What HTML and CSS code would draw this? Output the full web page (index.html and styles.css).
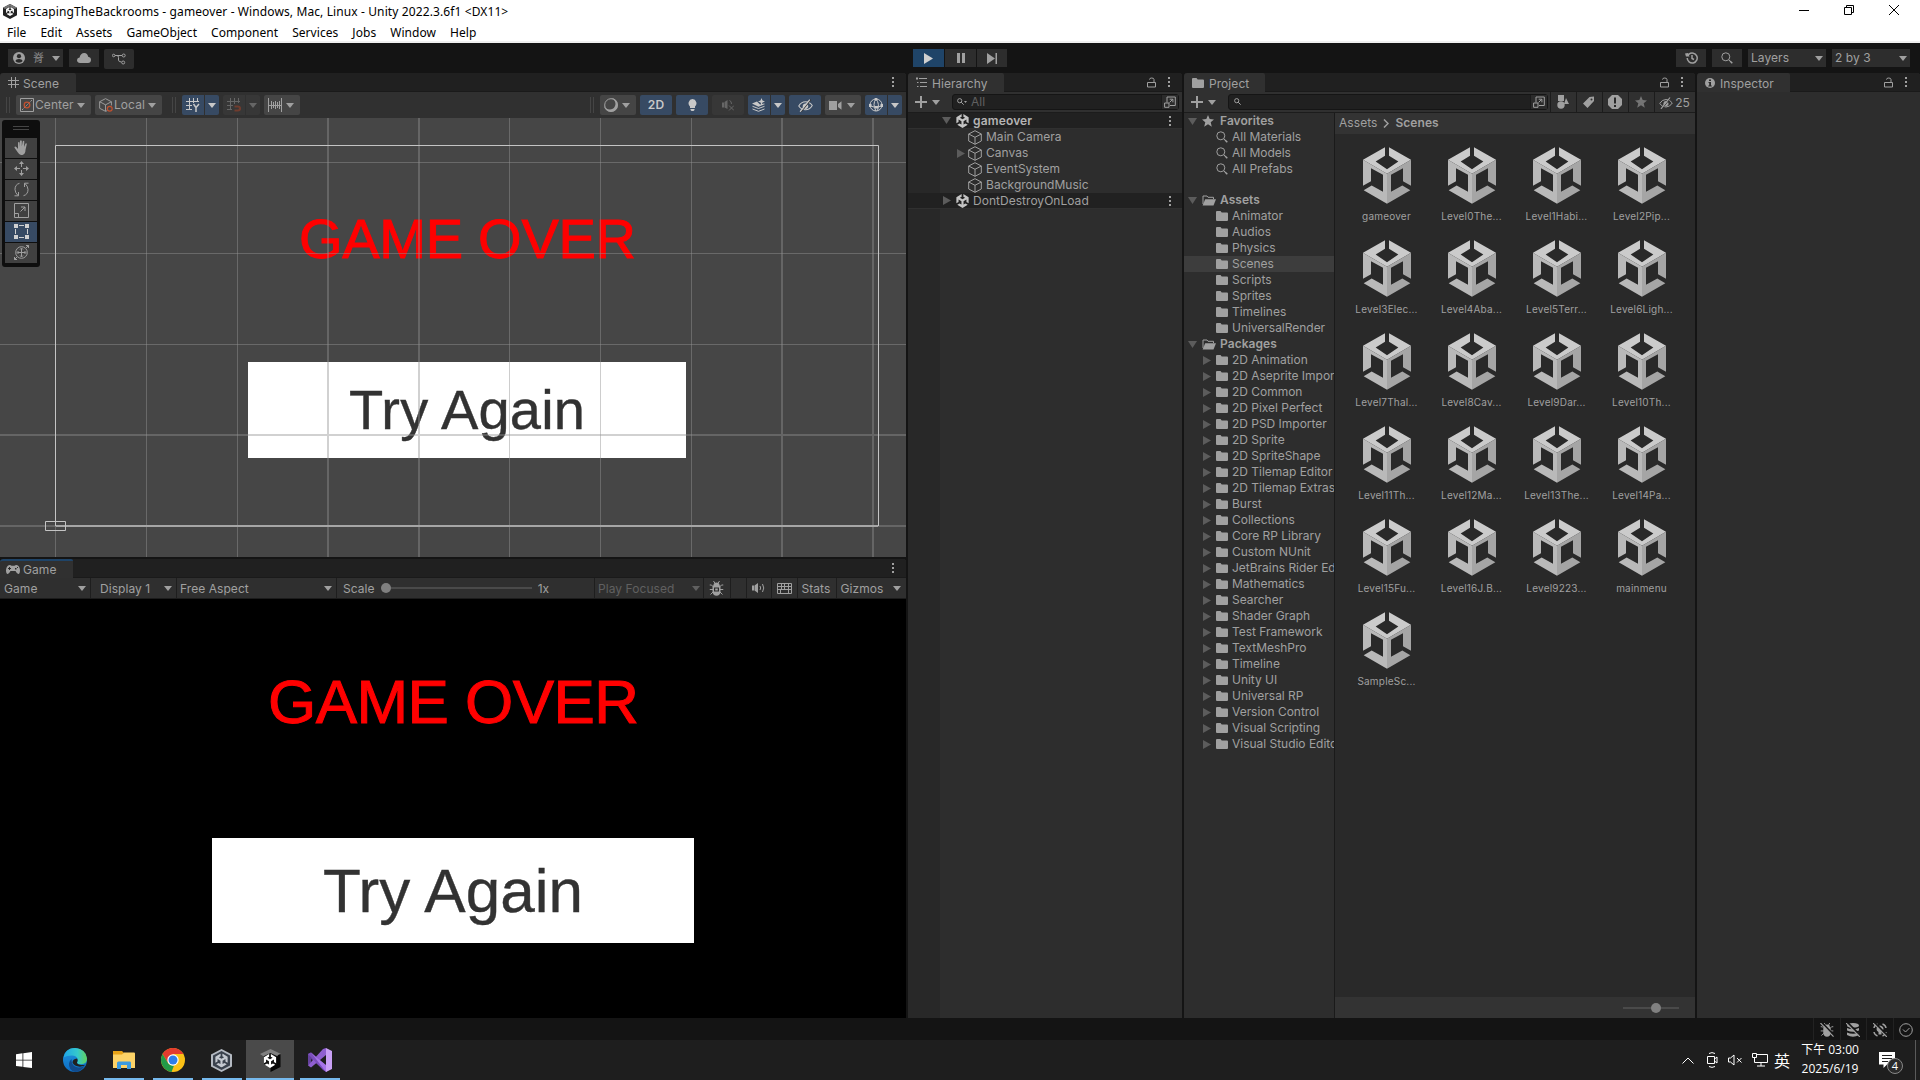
FILE: index.html
```html
<!DOCTYPE html>
<html lang="en">
<head>
    <meta charset="UTF-8">
    <meta name="viewport" content="width=device-width, initial-scale=1.0">
    <title>EscapingTheBackrooms - gameover</title>
    <link rel="stylesheet" href="styles.css">
</head>
<body>
    <svg class="defs">
        <defs>
            <symbol id="scene-asset" viewBox="0 0 144 170">
                <path fill="#cbcbcb" d="M66 0V26L38 43L72 66L106 43L78 26V0L144 38L72 80L0 38Z"/>
                <path fill="#b9b9b9" d="M0 38L72 80V170L2 129L26 115L60 134V83L24 63V102L0 116Z"/>
                <path fill="#a5a5a5" d="M144 38L72 80V170L142 129L118 115L84 134V83L120 63V102L144 116Z"/>
            </symbol>
            <symbol id="unity" viewBox="0 0 14 16">
                <path d="M6 0V3L4 4.200L7 6L10 4.200L8 3V0L14 3.600V10.500L11.500 9V6.300L8.200 8.200V12L10.400 10.800L13 12.300L7 16L1 12.300L3.600 10.800L5.800 12V8.200L2.500 6.300V9L0 10.500V3.600Z"/>
            </symbol>
            <symbol id="cube" viewBox="0 0 14 15">
                <path class="line" d="M7 .7L13.300 4V11L7 14.300L.7 11V4ZM.7 4L7 7.300L13.300 4M7 7.300V14.300"/>
            </symbol>
            <symbol id="folder" viewBox="0 0 12 10">
                <path d="M0 1Q0 0 1 0H4.500L5.700 1.600H11Q12 1.600 12 2.600V9Q12 10 11 10H1Q0 10 0 9Z"/>
            </symbol>
            <symbol id="folder-open" viewBox="0 0 14 11">
                <path class="line" d="M1 9V1H5L6 2.300H11.500V4"/>
                <path d="M3.200 4.300H14L11.500 10.500H.6Z"/>
            </symbol>
            <symbol id="lens" viewBox="0 0 12 12">
                <circle class="line" cx="4.800" cy="4.800" r="4"/>
                <path class="line" d="M7.700 7.700L9 9"/>
                <path class="bold" d="M9 9L11.300 11.300"/>
            </symbol>
            <symbol id="lens-small" viewBox="0 0 7 7">
                <circle class="line" cx="2.700" cy="2.700" r="2.100"/>
                <path class="line" d="M4.200 4.200L6.700 6.700"/>
            </symbol>
            <symbol id="star" viewBox="0 0 12 12">
                <path d="M6 0L7.700 4.100L12 4.500L8.700 7.300L9.800 11.700L6 9.300L2.200 11.700L3.300 7.300L0 4.500L4.300 4.100Z"/>
            </symbol>
            <symbol id="caret" viewBox="0 0 8 5"><path d="M0 0H8L4 5Z"/></symbol>
            <symbol id="fold" viewBox="0 0 9 7"><path d="M0 0H9L4.500 7Z"/></symbol>
            <symbol id="unfold" viewBox="0 0 8 9"><path d="M0 0V9L8 4.500Z"/></symbol>
            <symbol id="kebab" viewBox="0 0 2 10"><path d="M0 0H2V2H0ZM0 4H2V6H0ZM0 8H2V10H0Z"/></symbol>
            <symbol id="lock" viewBox="0 0 9 11">
                <path class="line" d="M.5 5.500H8.500V10H.5ZM7 5V2.500Q7 1 4.700 1Q2.500 1 2.500 2.600"/>
            </symbol>
            <symbol id="plus" viewBox="0 0 12 12"><path d="M5 0H7V5H12V7H7V12H5V7H0V5H5Z"/></symbol>
            <symbol id="open-search" viewBox="0 0 12 12">
                <path class="line" d="M3 6.500V1H11.300V9.500H6M.6 7H5V11.300H.6ZM5.500 6.500L8.700 3.300M5.700 3.200H8.900V6.300"/>
            </symbol>
            <symbol id="eye-off" viewBox="0 0 14 12">
                <path class="line" d="M.7 6.500Q3 2.500 7 2.500Q11 2.500 13.300 6Q11 10 7 10Q3 10 .7 6.500Z"/>
                <path d="M9.500 6.200A2.600 2.600 0 1 1 4.400 6.200A2.600 2.600 0 0 1 9.500 6.200Z"/>
                <path class="line cut" d="M12 .5L3 11.800"/>
                <path class="slash" d="M11 .5L2 11.800"/>
            </symbol>
            <symbol id="bug" viewBox="0 0 14 15">
                <path class="line" d="M4 0L5.300 2M10 0L8.700 2M0 4H2L4 6M14 4H12L10 6M0 8.500H14M1 13.500L3.500 11M13 13.500L10.500 11"/>
                <path d="M4 4Q4 1.500 7 1.500Q10 1.500 10 4L11 6V11Q10.500 14.500 7 14.800Q3.500 14.500 3 11V6Z"/>
            </symbol>
        </defs>
    </svg>

    <header class="titlebar">
        <svg class="app-icon" viewBox="0 0 14 15">
            <path fill="#222" d="M7 0L14 3.700V11.300L7 15L0 11.300V3.700Z"/>
            <path fill="#777" d="M7 0L14 3.700L12 5L7 2.500L2 5L0 3.700Z"/>
            <use href="#unity" x="3" y="3" width="8" height="9" fill="#fff"/>
        </svg>
        <span class="caption">EscapingTheBackrooms - gameover - Windows, Mac, Linux - Unity 2022.3.6f1 &lt;DX11&gt;</span>
        <div class="win-buttons">
            <svg viewBox="0 0 10 10"><path d="M0 5.500H10"/></svg>
            <svg viewBox="0 0 10 10"><path d="M.5 2.500H7.500V9.500H.5ZM2.500 2.500V.5H9.500V7.500H7.500"/></svg>
            <svg viewBox="0 0 10 10"><path d="M0 0L10 10M10 0L0 10"/></svg>
        </div>
    </header>
    <nav class="menubar">
        <span>File</span><span>Edit</span><span>Assets</span><span>GameObject</span><span>Component</span><span>Services</span><span>Jobs</span><span>Window</span><span>Help</span>
    </nav>

    <div class="main-toolbar">
        <div class="bar-group left">
            <div class="bar-btn account">
                <svg class="i12" viewBox="0 0 12 12"><circle cx="6" cy="6" r="6"/><circle class="hole" cx="6" cy="4.200" r="2.100"/><path class="hole" d="M2.300 9Q3 7 6 7Q9 7 9.700 9Q8.500 10.700 6 10.700Q3.500 10.700 2.300 9Z"/></svg>
                <span>脊</span>
                <svg class="caret"><use href="#caret"/></svg>
            </div>
            <div class="bar-btn cloud"><svg width="14" height="10" viewBox="0 0 14 10"><path d="M3 10Q0 9.700 0 7Q.2 4.500 2.600 4.400Q3.500 .2 7.300 0Q10.500 .2 11.200 3.700Q14 4.200 14 7Q13.800 9.800 11 10Z"/></svg></div>
            <div class="bar-btn vcs"><svg width="14" height="12" viewBox="0 0 14 12"><path class="line" d="M3 2.500H10M5 2.500Q6.500 2.500 6.500 4.500V7Q6.500 9 9.500 9"/><circle class="line" cx="1.700" cy="2.500" r="1.300"/><circle class="line" cx="11.700" cy="2.500" r="1.500"/><circle class="line" cx="11.200" cy="9.500" r="1.500"/></svg></div>
        </div>
        <div class="bar-group play">
            <div class="bar-btn on"><svg width="9" height="11" viewBox="0 0 9 11"><path d="M0 0L9 5.500L0 11Z"/></svg></div>
            <div class="bar-btn"><svg width="8" height="10" viewBox="0 0 8 10"><path d="M0 0H3V10H0ZM5 0H8V10H5Z"/></svg></div>
            <div class="bar-btn step"><svg width="10" height="11" viewBox="0 0 10 11"><path d="M0 0L8 5.500L0 11ZM8.500 0H10V11H8.500Z"/></svg></div>
        </div>
        <div class="bar-group right">
            <div class="bar-btn"><svg width="13" height="12" viewBox="0 0 13 12"><path class="bold" d="M2.200 6A5 5 0 1 0 4 2.200L2.500 3.500M7 3V6.500L9 7.500"/><path d="M0 1.500L1 4.500L4.500 4.500L3 1Z"/></svg></div>
            <div class="bar-btn"><svg class="i12"><use href="#lens"/></svg></div>
            <div class="bar-btn drop"><span>Layers</span><svg class="caret"><use href="#caret"/></svg></div>
            <div class="bar-btn drop"><span>2 by 3</span><svg class="caret"><use href="#caret"/></svg></div>
        </div>
    </div>

    <main class="workspace">
        <div class="column views">
            <section class="panel scene">
                <div class="tabs">
                    <div class="tab w76"><svg class="i11" viewBox="0 0 11 11"><path class="line" d="M3.500 0V11M7.500 0V11M0 3.500H11M0 7.500H11"/></svg>Scene</div>
                    <svg class="kebab"><use href="#kebab"/></svg>
                </div>
                <div class="scene-tools">
                    <i class="grip"></i>
                    <div class="tool w75"><svg class="i14" viewBox="0 0 14 14"><path class="line" d="M.5 .5H13.500V13.500H.5Z"/><path class="line" stroke-dasharray="2 1" d="M2 12L12 2"/><circle class="red" cx="7" cy="7" r="2.800"/></svg><span>Center</span><svg class="caret"><use href="#caret"/></svg></div>
                    <div class="tool w67 gap4"><svg class="i14" viewBox="0 0 15 15"><path class="line" d="M9 13.500L7 14.300L.7 11V4L7 .7L13.300 4V8M.7 4L7 7.300L13.300 4M7 7.300V14"/><circle class="red" cx="11.500" cy="11.500" r="2.600"/></svg><span>Local</span><svg class="caret"><use href="#caret"/></svg></div>
                    <i class="grip second"></i>
                    <div class="tool w22 on flat-r"><svg class="i14" viewBox="0 0 14 14"><path class="line" d="M3.500 0V12M7.500 0V5M11.500 0V4M0 3.500H13M0 7.500H6M0 11.500H6"/><path class="bold" d="M7.500 6L10 9.500L13 6M10 9.500V14"/></svg></div>
                    <div class="tool w14 on flat-l"><svg class="caret"><use href="#caret"/></svg></div>
                    <div class="tool w22 off flat-r gap4"><svg class="i14" viewBox="0 0 14 14"><path class="line" d="M3.500 0V12M7.500 0V6M11.500 0V5M0 3.500H13M0 7.500H6M0 11.500H5"/><path class="red thick" d="M7.500 8.500H11Q13 8.500 13 10.500Q13 12.500 11 12.500H7.500"/></svg></div>
                    <div class="tool w14 off flat-l"><svg class="caret"><use href="#caret"/></svg></div>
                    <div class="tool w36 gap4"><svg class="i14" viewBox="0 0 14 14"><path class="line" d="M.5 0V14M3.500 3V11M5.500 4V10M7.500 3V11M9.500 4V10M11.500 3V11M13.500 0V14M0 7.500H14"/></svg><svg class="caret"><use href="#caret"/></svg></div>

                    <i class="grip push"></i>
                    <div class="tool w36"><svg class="i14" viewBox="0 0 14 14"><path d="M7 0A7 7 0 1 1 0 7Q1.500 11.500 6 11.500Q11 11 11.500 6Q11.300 1.500 7 0Z"/><circle class="line" cx="7" cy="7" r="6.300"/></svg><svg class="caret"><use href="#caret"/></svg></div>
                    <div class="tool w32 on gap4"><b>2D</b></div>
                    <div class="tool w32 on gap4"><svg width="9" height="12" viewBox="0 0 9 12"><path d="M4.500 0A4.300 4.300 0 0 1 7 7.500V9H2V7.500A4.300 4.300 0 0 1 4.500 0ZM2.500 10H6.500V11L5.500 12H3.500L2.500 11Z"/></svg></div>
                    <div class="tool w32 off gap4"><svg class="i12" viewBox="0 0 12 12"><path d="M0 3.500H2V8.500H0ZM2.500 3L5.500 1V10L2.500 8.500Z"/><path class="line" d="M7.500 1.500Q9.500 2 9.500 5M7 6.500L12 11.500M12 6.500L7 11.500"/></svg></div>
                    <div class="tool w22 on flat-r gap4"><svg class="i14" viewBox="0 0 14 14"><path d="M0 5.500L5 3.500L8 6.500L12 5.500L13 6L6.500 8.700ZM9.500 0L10.500 2.500L13 3.500L10.500 4.500L9.500 7L8.500 4.500L6 3.500L8.500 2.500Z"/><path class="line" d="M.5 8.300L6.500 10.500L12.500 8.300M.5 11L6.500 13.300L12.500 11"/></svg></div>
                    <div class="tool w14 on flat-l"><svg class="caret"><use href="#caret"/></svg></div>
                    <div class="tool w32 on gap4"><svg width="15" height="13"><use href="#eye-off"/></svg></div>
                    <div class="tool w36 gap4"><svg width="13" height="9" viewBox="0 0 13 9"><path d="M0 0H8V9H0ZM9 3L12.500 .3V8.700L9 6Z"/></svg><svg class="caret"><use href="#caret"/></svg></div>
                    <div class="tool w22 on flat-r gap4"><svg class="i14" viewBox="0 0 14 14"><circle class="line" cx="7" cy="7" r="6"/><path class="line" d="M1 7.500Q7 11 13 7.500M7 1Q3 6 7 13M7 1Q11 6 8.500 12.500"/><path d="M5.700 0H8.300V2.500H5.700ZM0 6H2.500V9H0ZM11.500 6H14V9H11.500ZM6 8H9V10.500H6Z"/></svg></div>
                    <div class="tool w14 on flat-l end"><svg class="caret"><use href="#caret"/></svg></div>
                </div>
                <div class="scene-view">
                    <svg class="canvas" width="906" height="439" viewBox="0 118 906 439">
                        <rect x="248" y="362" width="438" height="96" fill="#fff"/>
                        <text class="over" x="299" y="258" font-size="56" textLength="337">GAME OVER</text>
                        <text class="retry" x="349" y="429" font-size="56" textLength="236">Try Again</text>
                        <g class="grid">
                            <path d="M146.500 118V557M237.500 118V557M509.500 118V557M600.500 118V557M691.500 118V557M55.500 118V557"/>
                            <path class="wide" d="M328 118V557M419 118V557M782 118V557M873 118V557M0 435H906M0 526H906"/>
                            <path d="M0 162.500H906M0 253.500H906M0 344.500H906"/>
                        </g>
                        <path class="bounds" d="M55.500 526V145.500H878.500V526"/>
                        <path class="bounds base" d="M56 526H878"/>
                        <path class="bounds" d="M45.500 521.500H65.500V530.500H45.500Z"/>
                    </svg>
                    <div class="palette">
                        <i></i>
                        <div><svg class="i15" viewBox="0 0 15 15"><path d="M4 9V2.500Q4.800 1.300 5.500 2.500V7L6 1Q7 -.4 7.800 1V6.500L8.800 1.300Q9.800 .2 10.300 1.500L10 7L11.500 3.500Q12.800 2.800 12.800 4L11.500 10Q11.500 14 8.500 15H7Q5 14.500 3.500 12L.4 7.500Q.8 6 2.300 7Z"/></svg></div>
                        <div><svg class="i15" viewBox="0 0 15 15"><path d="M7.500 0L10 3H5ZM7.500 15L10 12H5ZM0 7.500L3 5V10ZM15 7.500L12 5V10ZM7 3H8V6H7ZM7 9H8V12H7ZM3 7H6V8H3ZM9 7H12V8H9Z"/></svg></div>
                        <div><svg class="i15" viewBox="0 0 15 15"><path class="line" d="M5.500 1.300Q1 2.500 1 7.500Q1.200 11 4 13.500M.5 13.800H4.500V10M9.500 13.700Q14 12.500 14 7.500Q13.800 4 11 1.500M14.500 1.200H10.500V5"/></svg></div>
                        <div><svg class="i15" viewBox="0 0 15 15"><path class="line" d="M.5 .5H14.500V14.500H.5ZM.5 10.500H4.500V14.500M6.500 8.500L11 4M7 4H11V8"/></svg></div>
                        <div class="on"><svg class="i15" viewBox="0 0 15 15"><path d="M0 0H4V4H0ZM11 0H15V4H11ZM0 11H4V15H0ZM11 11H15V15H11Z"/><path class="line" d="M5 1.500H10M5 13.500H10M1.500 5V10M13.500 5V10"/></svg></div>
                        <div><svg class="i15" viewBox="0 0 15 15"><circle class="line" cx="7.500" cy="7.500" r="5.800"/><path class="line" d="M7.500 3.500V11.500M3.500 7.500H11.500M6 4.500L7.500 3L9 4.500M6 10.500L7.500 12L9 10.500M4.500 6L3 7.500L4.500 9M10.500 6L12 7.500L10.500 9M12 .5H14.500V3M.5 12V14.500H3M14.500 .5L12 3M.5 14.500L3 12"/></svg></div>
                    </div>
                </div>
            </section>

            <section class="panel game">
                <div class="tabs">
                    <div class="tab w73 focused"><svg width="14" height="9" viewBox="0 0 14 9"><path d="M3.500 0Q5 0 5.500 .8H8.500Q9 0 10.500 0Q13.500 .3 14 5Q14 9 12.300 9Q11 9 9.500 6H4.500Q3 9 1.700 9Q0 9 0 5Q.5 .3 3.500 0Z"/><path class="hole" d="M2 3H5V4H2ZM3 2H4V5H3ZM9 3H10.500V4.500H9ZM11 2H12V3H11Z"/></svg>Game</div>
                    <svg class="kebab"><use href="#kebab"/></svg>
                </div>
                <div class="game-tools">
                    <div class="seg g-mode"><span>Game</span><svg class="caret"><use href="#caret"/></svg></div>
                    <div class="seg g-display"><span>Display 1</span><svg class="caret"><use href="#caret"/></svg></div>
                    <div class="seg g-aspect"><span>Free Aspect</span><svg class="caret"><use href="#caret"/></svg></div>
                    <div class="seg g-scale"><span>Scale</span><div class="slider"><i></i></div><span>1x</span></div>
                    <div class="seg g-focus"><span>Play Focused</span><svg class="caret"><use href="#caret"/></svg></div>
                    <div class="seg g-bug"><svg width="15" height="15" viewBox="0 0 14 15"><use href="#bug" width="14" height="15"/><path class="hole" d="M4.500 6.500H9.500V10.500H4.500Z"/><path d="M5.700 7.500H8.300V9.500H5.700Z"/></svg></div>
                    <div class="seg g-empty"></div>
                    <div class="seg g-icon"><svg width="13" height="10" viewBox="0 0 13 10"><path d="M0 2.500H2V7.500H0ZM2.500 2.500L6 0V10L2.500 7.500Z"/><path class="line" d="M8 3Q9.300 5 8 7M10.500 1Q13 5 10.500 9"/></svg></div>
                    <div class="seg g-icon"><svg width="15" height="11" viewBox="0 0 15 11"><path class="line" d="M.5 .5H14.500V10.500H.5ZM.5 3.500H14.500M.5 6.500H14.500M4.500 .5V6.500M7.500 .5V6.500M11.500 .5V6.500M3.500 6.500V10.500M11.500 6.500V10.500"/></svg></div>
                    <div class="seg g-stats"><span>Stats</span></div>
                    <div class="seg g-gizmos"><span>Gizmos</span></div>
                    <div class="seg g-last"><svg class="caret"><use href="#caret"/></svg></div>
                </div>
                <div class="game-view">
                    <svg class="canvas" width="906" height="419" viewBox="0 599 906 419">
                        <rect x="212" y="838" width="482" height="105" fill="#fff"/>
                        <text class="over" x="268" y="723" font-size="62" textLength="371">GAME OVER</text>
                        <text class="retry" x="323" y="912" font-size="62" textLength="260">Try Again</text>
                    </svg>
                </div>
            </section>
        </div>

        <section class="panel hierarchy">
            <div class="tabs">
                <div class="tab w96"><svg class="i11" viewBox="0 0 11 11"><path class="line" d="M3 1.500H11M4 5.500H11M4 9.500H11M0 1.500H2M1 0V3M1 5.500H2.500M1 9.500H2.500"/></svg>Hierarchy</div>
                <svg class="lock"><use href="#lock"/></svg>
                <svg class="kebab"><use href="#kebab"/></svg>
            </div>
            <div class="search-tools">
                <svg class="i12"><use href="#plus"/></svg><svg class="caret"><use href="#caret"/></svg>
                <div class="search"><svg class="i7"><use href="#lens-small"/></svg><svg class="tiny"><use href="#caret"/></svg><span>All</span><div class="expand"><svg class="i12"><use href="#open-search"/></svg></div></div>
            </div>
            <div class="objects">
                <div class="object root"><svg class="fold"><use href="#fold"/></svg><svg class="logo"><use href="#unity"/></svg><b>gameover</b><svg class="kebab"><use href="#kebab"/></svg></div>
                <div class="object"><svg class="cube"><use href="#cube"/></svg>Main Camera</div>
                <div class="object parent"><svg class="unfold"><use href="#unfold"/></svg><svg class="cube"><use href="#cube"/></svg>Canvas</div>
                <div class="object"><svg class="cube"><use href="#cube"/></svg>EventSystem</div>
                <div class="object"><svg class="cube"><use href="#cube"/></svg>BackgroundMusic</div>
                <div class="object root"><svg class="unfold"><use href="#unfold"/></svg><svg class="logo"><use href="#unity"/></svg>DontDestroyOnLoad<svg class="kebab"><use href="#kebab"/></svg></div>
            </div>
        </section>

        <section class="panel project">
            <div class="tabs">
                <div class="tab w81"><svg width="12" height="10"><use href="#folder"/></svg>Project</div>
                <svg class="lock"><use href="#lock"/></svg>
                <svg class="kebab"><use href="#kebab"/></svg>
            </div>
            <div class="search-tools">
                <svg class="i12"><use href="#plus"/></svg><svg class="caret"><use href="#caret"/></svg>
                <div class="search"><svg class="i7"><use href="#lens-small"/></svg><div class="expand"><svg class="i12"><use href="#open-search"/></svg></div></div>
                <div class="filter"><svg width="12" height="14" viewBox="0 0 12 14"><path d="M1 0H7V6H1ZM9 3L12 9H7Z"/><circle cx="4" cy="10" r="3.700"/></svg></div>
                <div class="filter"><svg class="i12" viewBox="0 0 12 12"><path fill-rule="evenodd" d="M6.500 1L11 .5V5L4.500 12L0 7.500ZM8.500 2.500A1 1 0 1 0 9.500 3.500A1 1 0 0 0 8.500 2.500Z"/></svg></div>
                <div class="filter"><svg class="i14" viewBox="0 0 14 14"><path d="M4 0H10L14 4V10L10 14H4L0 10V4Z"/><path class="hole" d="M6 2.500H8V8.500H6ZM6 10H8V12H6Z"/></svg></div>
                <div class="filter dim"><svg class="i12"><use href="#star"/></svg></div>
                <div class="filter hidden-count"><svg width="14" height="12"><use href="#eye-off"/></svg>25</div>
            </div>
            <div class="browser">
                <div class="tree">
                    <div class="node top"><svg class="fold"><use href="#fold"/></svg><svg class="i12"><use href="#star"/></svg><b>Favorites</b></div>
                    <div class="node leaf"><svg class="i12"><use href="#lens"/></svg>All Materials</div>
                    <div class="node leaf"><svg class="i12"><use href="#lens"/></svg>All Models</div>
                    <div class="node leaf last"><svg class="i12"><use href="#lens"/></svg>All Prefabs</div>
                    <div class="node top"><svg class="fold"><use href="#fold"/></svg><svg class="dir-open"><use href="#folder-open"/></svg><b>Assets</b></div>
                    <div class="node leaf"><svg class="dir"><use href="#folder"/></svg>Animator</div>
                    <div class="node leaf"><svg class="dir"><use href="#folder"/></svg>Audios</div>
                    <div class="node leaf"><svg class="dir"><use href="#folder"/></svg>Physics</div>
                    <div class="node leaf selected"><svg class="dir"><use href="#folder"/></svg>Scenes</div>
                    <div class="node leaf"><svg class="dir"><use href="#folder"/></svg>Scripts</div>
                    <div class="node leaf"><svg class="dir"><use href="#folder"/></svg>Sprites</div>
                    <div class="node leaf"><svg class="dir"><use href="#folder"/></svg>Timelines</div>
                    <div class="node leaf"><svg class="dir"><use href="#folder"/></svg>UniversalRender</div>
                    <div class="node top"><svg class="fold"><use href="#fold"/></svg><svg class="dir-open"><use href="#folder-open"/></svg><b>Packages</b></div>
                    <div class="node pkg"><svg class="unfold"><use href="#unfold"/></svg><svg class="dir"><use href="#folder"/></svg>2D Animation</div>
                    <div class="node pkg"><svg class="unfold"><use href="#unfold"/></svg><svg class="dir"><use href="#folder"/></svg>2D Aseprite Import</div>
                    <div class="node pkg"><svg class="unfold"><use href="#unfold"/></svg><svg class="dir"><use href="#folder"/></svg>2D Common</div>
                    <div class="node pkg"><svg class="unfold"><use href="#unfold"/></svg><svg class="dir"><use href="#folder"/></svg>2D Pixel Perfect</div>
                    <div class="node pkg"><svg class="unfold"><use href="#unfold"/></svg><svg class="dir"><use href="#folder"/></svg>2D PSD Importer</div>
                    <div class="node pkg"><svg class="unfold"><use href="#unfold"/></svg><svg class="dir"><use href="#folder"/></svg>2D Sprite</div>
                    <div class="node pkg"><svg class="unfold"><use href="#unfold"/></svg><svg class="dir"><use href="#folder"/></svg>2D SpriteShape</div>
                    <div class="node pkg"><svg class="unfold"><use href="#unfold"/></svg><svg class="dir"><use href="#folder"/></svg>2D Tilemap Editor</div>
                    <div class="node pkg"><svg class="unfold"><use href="#unfold"/></svg><svg class="dir"><use href="#folder"/></svg>2D Tilemap Extras</div>
                    <div class="node pkg"><svg class="unfold"><use href="#unfold"/></svg><svg class="dir"><use href="#folder"/></svg>Burst</div>
                    <div class="node pkg"><svg class="unfold"><use href="#unfold"/></svg><svg class="dir"><use href="#folder"/></svg>Collections</div>
                    <div class="node pkg"><svg class="unfold"><use href="#unfold"/></svg><svg class="dir"><use href="#folder"/></svg>Core RP Library</div>
                    <div class="node pkg"><svg class="unfold"><use href="#unfold"/></svg><svg class="dir"><use href="#folder"/></svg>Custom NUnit</div>
                    <div class="node pkg"><svg class="unfold"><use href="#unfold"/></svg><svg class="dir"><use href="#folder"/></svg>JetBrains Rider Ed</div>
                    <div class="node pkg"><svg class="unfold"><use href="#unfold"/></svg><svg class="dir"><use href="#folder"/></svg>Mathematics</div>
                    <div class="node pkg"><svg class="unfold"><use href="#unfold"/></svg><svg class="dir"><use href="#folder"/></svg>Searcher</div>
                    <div class="node pkg"><svg class="unfold"><use href="#unfold"/></svg><svg class="dir"><use href="#folder"/></svg>Shader Graph</div>
                    <div class="node pkg"><svg class="unfold"><use href="#unfold"/></svg><svg class="dir"><use href="#folder"/></svg>Test Framework</div>
                    <div class="node pkg"><svg class="unfold"><use href="#unfold"/></svg><svg class="dir"><use href="#folder"/></svg>TextMeshPro</div>
                    <div class="node pkg"><svg class="unfold"><use href="#unfold"/></svg><svg class="dir"><use href="#folder"/></svg>Timeline</div>
                    <div class="node pkg"><svg class="unfold"><use href="#unfold"/></svg><svg class="dir"><use href="#folder"/></svg>Unity UI</div>
                    <div class="node pkg"><svg class="unfold"><use href="#unfold"/></svg><svg class="dir"><use href="#folder"/></svg>Universal RP</div>
                    <div class="node pkg"><svg class="unfold"><use href="#unfold"/></svg><svg class="dir"><use href="#folder"/></svg>Version Control</div>
                    <div class="node pkg"><svg class="unfold"><use href="#unfold"/></svg><svg class="dir"><use href="#folder"/></svg>Visual Scripting</div>
                    <div class="node pkg"><svg class="unfold"><use href="#unfold"/></svg><svg class="dir"><use href="#folder"/></svg>Visual Studio Edito</div>
                </div>
                <div class="content">
                    <div class="crumbs"><span>Assets</span><svg width="6" height="9" viewBox="0 0 6 9"><path class="bold" d="M1 .5L5 4.500L1 8.500"/></svg><b>Scenes</b></div>
                    <div class="assets">
                        <div class="asset"><svg><use href="#scene-asset"/></svg>gameover</div>
                        <div class="asset"><svg><use href="#scene-asset"/></svg>Level0The...</div>
                        <div class="asset"><svg><use href="#scene-asset"/></svg>Level1Habi...</div>
                        <div class="asset"><svg><use href="#scene-asset"/></svg>Level2Pip...</div>
                        <div class="asset"><svg><use href="#scene-asset"/></svg>Level3Elec...</div>
                        <div class="asset"><svg><use href="#scene-asset"/></svg>Level4Aba...</div>
                        <div class="asset"><svg><use href="#scene-asset"/></svg>Level5Terr...</div>
                        <div class="asset"><svg><use href="#scene-asset"/></svg>Level6Ligh...</div>
                        <div class="asset"><svg><use href="#scene-asset"/></svg>Level7Thal...</div>
                        <div class="asset"><svg><use href="#scene-asset"/></svg>Level8Cav...</div>
                        <div class="asset"><svg><use href="#scene-asset"/></svg>Level9Dar...</div>
                        <div class="asset"><svg><use href="#scene-asset"/></svg>Level10Th...</div>
                        <div class="asset"><svg><use href="#scene-asset"/></svg>Level11Th...</div>
                        <div class="asset"><svg><use href="#scene-asset"/></svg>Level12Ma...</div>
                        <div class="asset"><svg><use href="#scene-asset"/></svg>Level13The...</div>
                        <div class="asset"><svg><use href="#scene-asset"/></svg>Level14Pa...</div>
                        <div class="asset"><svg><use href="#scene-asset"/></svg>Level15Fu...</div>
                        <div class="asset"><svg><use href="#scene-asset"/></svg>Level16J.B...</div>
                        <div class="asset"><svg><use href="#scene-asset"/></svg>Level9223...</div>
                        <div class="asset"><svg><use href="#scene-asset"/></svg>mainmenu</div>
                        <div class="asset"><svg><use href="#scene-asset"/></svg>SampleSc...</div>
                    </div>
                    <div class="zoom-bar"><div class="slider"><i></i></div></div>
                </div>
            </div>
        </section>

        <section class="panel inspector">
            <div class="tabs">
                <div class="tab w93"><svg width="10" height="10" viewBox="0 0 10 10"><circle cx="5" cy="5" r="5"/><path class="hole" d="M4 1.500H6V3H4ZM3.500 4H6V7.500H6.800V8.500H3.300V7.500H4.200V5H3.500Z"/></svg>Inspector</div>
                <svg class="lock"><use href="#lock"/></svg>
                <svg class="kebab"><use href="#kebab"/></svg>
            </div>
        </section>
    </main>

    <div class="statusbar">
        <div><svg class="i14" viewBox="0 0 14 15"><use href="#bug" width="14" height="15"/><path class="cut-wide" d="M2 0L14 12.500"/><path class="slash" d="M0 0L14 14.500"/></svg></div>
        <div><svg class="i14" viewBox="0 0 14 14"><path d="M1 2.500Q1 0 7 0Q13 0 13 2.500Q13 4.500 7 4.500Q1 4.500 1 2.500ZM1 5Q7 7.500 13 5V7.500Q7 10 1 7.500ZM1 9.500Q7 12 13 9.500V12Q7 15.500 1 12Z"/><path class="cut-wide" d="M2 0L14 12"/><path class="slash" d="M0 0L14 14"/></svg></div>
        <div><svg class="i14" viewBox="0 0 14 14"><path class="bold" d="M1 5Q1.500 2 4.500 1M9.500 1Q12.500 2 13 5M13 9Q12.500 12 9.500 13M4.500 13Q1.500 12 1 9"/><path d="M7 2.500Q10.500 3 10.500 6Q10 8 8.500 9V11.500H5.500V9Q3.500 8 3.500 6Q4 3 7 2.500Z"/><path class="cut-wide" d="M2 0L14 12"/><path class="slash" d="M0 0L14 14"/></svg></div>
        <div><svg class="i14" viewBox="0 0 14 14"><circle class="line" cx="7" cy="7" r="6.300"/><path class="line" d="M4 6.500L6.500 9L10.500 5"/></svg></div>
    </div>

    <footer class="taskbar">
        <div class="task"><svg width="16" height="16" viewBox="0 0 16 16"><path fill="#fff" d="M0 2.200L6.500 1.300V7.700H0ZM7.300 1.200L16 0V7.700H7.300ZM0 8.500H6.500V14.800L0 13.900ZM7.300 8.500H16V16L7.300 14.900Z"/></svg></div>
        <div class="task">
            <svg width="24" height="24" viewBox="0 0 24 24">
                <linearGradient id="edge-top"><stop offset="0" stop-color="#1fa5e8"/><stop offset=".6" stop-color="#35c9cc"/><stop offset="1" stop-color="#62d35a"/></linearGradient>
                <linearGradient id="edge-body" x2="0" y2="1"><stop offset="0" stop-color="#2196dd"/><stop offset="1" stop-color="#0c6cc4"/></linearGradient>
                <circle cx="12" cy="12" r="12" fill="url(#edge-body)"/>
                <path fill="url(#edge-top)" d="M.5 9.500Q2 0 12 0Q23 1 24 10.500Q24 16 18 16.300Q14 16.200 14 14.500Q15.500 13 14.500 10.500Q13 7.500 9 7.500Q3.500 7.500 .5 9.500Z"/>
                <path fill="#114a8b" d="M8.500 11Q8 18 15 19.500Q19 20 22 17.500Q18 24 12 24Q5.500 22 6 15.500Q6.500 12.500 8.500 11Z"/>
                <path fill="#202020" d="M14 10.500Q9.500 11 9.500 14.500Q11 18.500 17 18.700Q21 18.500 22.800 16.500Q20 17.500 17 16.800Q13 16 14.300 13.800Q15.200 12 14 10.500Z"/>
            </svg>
        </div>
        <div class="task open">
            <svg width="22" height="18" viewBox="0 0 22 18"><path fill="#e8a317" d="M0 0H9L10.500 1.500V4H0Z"/><path fill="#fdd367" d="M0 3.500H9L11 1.500H21Q22 1.500 22 2.500V17H0Z"/><path fill="#3c9be0" d="M4 18V12Q4 10.500 5.500 10.500H17Q18 10.500 18 12V18H14V14H8V18Z"/></svg>
        </div>
        <div class="task open">
            <svg width="24" height="24" viewBox="0 0 24 24"><circle cx="12" cy="12" r="12" fill="#fbc116"/><path fill="#e33b2e" d="M1.600 6A12 12 0 0 1 22.400 6H12L7 15Z"/><path fill="#229a48" d="M1.600 6L7 15Q9 18 13 17.500L10.500 23.900A12 12 0 0 1 1.600 6Z"/><circle cx="12" cy="12" r="5.700" fill="#fff"/><circle cx="12" cy="12" r="4.500" fill="#2e7de9"/></svg>
        </div>
        <div class="task open">
            <svg width="21" height="23" viewBox="0 0 21 23"><path fill="#b4bac2" d="M10.500 0L21 5.500V17.500L10.500 23L0 17.500V5.500Z"/><path fill="#3a424d" d="M10.500 2L19 6.500V16.500L10.500 21L2 16.500V6.500Z"/><use href="#unity" x="4" y="4.500" width="13" height="14" fill="#c4c9d0"/></svg>
        </div>
        <div class="task open active">
            <svg width="21" height="23" viewBox="0 0 21 23"><path fill="#808080" d="M10.500 0L21 5L18 7H3L0 5Z"/><path fill="#050505" d="M18 6L20.500 5V18L10.500 23V19Z"/><path fill="#111" d="M4 7L10.500 4L17 7V15L10.500 19L4 15Z"/><use href="#unity" x="3.500" y="5" width="13" height="14" fill="#fff"/></svg>
        </div>
        <div class="task open">
            <svg width="24" height="24" viewBox="0 0 24 24"><path fill="#65429c" d="M0 6L3 4.500L18 19L18.500 24L3 11L3.500 16L0 17Z"/><path fill="#8f5fd0" d="M0 17.500L15 1L18 0V7L3 19.500Z"/><path fill="#7b4fbd" d="M0 6L3 4.500L18.500 18V24L15 22Z"/><path fill="#c9a0f5" d="M18 0L24 3V21L18 24Z"/><path fill="#a774e8" d="M3 4.500L8 9L18 17V24Z"/></svg>
        </div>
        <div class="tray">
            <svg class="chev" viewBox="0 0 12 7"><path d="M.5 6.500L6 1L11.500 6.500"/></svg>
            <svg class="meet" viewBox="0 0 12 16"><path d="M3 1.500Q6 -.3 9 1.500M3 14.500Q6 16.300 9 14.500M1.500 4.500H8.500V11.500H1.500ZM8.500 7L11 5V11L8.500 9"/></svg>
            <svg class="vol" viewBox="0 0 14 12"><path d="M.5 4H2.500L6 1V11L2.500 8H.5ZM9 4L13.500 8.500M13.500 4L9 8.500"/></svg>
            <svg class="net" viewBox="0 0 16 14"><path d="M4.500 1.500H15.500V9.500H2.500V5M.5 .5H4.500V4.500H.5ZM9 9.500V13M5 13H13"/></svg>
            <span class="ime">英</span>
            <div class="clock"><span>下午 03:00</span><span>2025/6/19</span></div>
            <div class="notify"><svg width="16" height="16" viewBox="0 0 16 16"><path fill="#fff" d="M0 0H16V12.500H8L4.500 16V12.500H0Z"/><path stroke="#202020" d="M3 3.500H13M3 6.500H13M3 9.500H9"/></svg><b>4</b></div>
            <i class="peek"></i>
        </div>
    </footer>
</body>
</html>
```
FILE: styles.css
```css
*{box-sizing:border-box}
body{
  margin:0;
  width:1920px;
  height:1080px;
  overflow:hidden;
  display:flex;
  flex-direction:column;
  background:#141414;
  color:#a0a0a0;
  font:12px/16px Inter, "Noto Sans CJK TC", sans-serif;
  letter-spacing:.06px;
  white-space:nowrap;
}
b{font-weight:600}
svg{display:block;flex:none;fill:currentColor}
svg.defs{width:0;height:0;position:absolute}

.line{fill:none;stroke:currentColor;stroke-width:1}
.bold{fill:none;stroke:currentColor;stroke-width:1.5}
.slash{fill:none;stroke:currentColor;stroke-width:1.2}
.red{fill:none;stroke:#c0502f;stroke-width:1.3}
.red.thick{stroke-width:2.2;stroke:#703c2e}
.hole{fill:#2a2a2a}
.cut{stroke:#303030}
.cut-wide{fill:none;stroke:#141414;stroke-width:1.8}
.on .cut{stroke:#374a63}

.i7{width:7px;height:7px}
.i11{width:11px;height:11px}
.i12{width:12px;height:12px}
.i14{width:14px;height:14px}
.i15{width:15px;height:15px}
.caret{width:8px;height:5px}
.tiny{width:3px;height:2px}
.kebab{width:2px;height:10px}
.lock{width:9px;height:11px}
.fold{width:9px;height:7px;color:#5c5c5c}
.unfold{width:8px;height:9px;color:#5c5c5c}

/* window chrome */
.titlebar{height:24px;background:#fff;color:#000;display:flex;align-items:center;padding-left:3px}
.app-icon{width:14px;height:15px;margin-top:-2px}
.caption{
  margin:-1px 0 0 6px;
  font:12px/20px "Noto Sans", "Open Sans", sans-serif;
  letter-spacing:.11px;
}
.win-buttons{margin-left:auto;display:flex;gap:35px;padding:0 21px 4px 0}
.win-buttons svg{width:10px;height:10px;fill:none;stroke:#000}
.menubar{
  height:19px;
  background:#fff;
  color:#000;
  border-bottom:2px solid #f0f0f0;
  display:flex;
  gap:14px;
  padding-left:7px;
  font:12px/17px "Noto Sans", "Open Sans", sans-serif;
  letter-spacing:.05px;
}

.main-toolbar{
  height:30px;
  flex:none;
  display:grid;
  grid-template-columns:905px 1fr auto;
  padding:6px 10px 0 8px;
}
.bar-group{display:flex}
.bar-btn{height:18px;background:#2d2d2d;display:flex;align-items:center;justify-content:center;width:30px}
.bar-btn.account{width:55px;justify-content:space-between;padding:0 3px 0 5px;margin-right:6px}
.bar-btn.account span{font-size:11px;opacity:.8}
.bar-btn.cloud{margin-right:5px}
.bar-btn.vcs{height:20px;border-radius:2px}
.play{gap:1px}
.play .bar-btn{width:31px}
.play .step{width:30px}
.play .on{background:#1f4468;color:#d0d0d0}
.right{gap:6px}
.bar-btn.drop{width:78px;justify-content:space-between;padding:0 3px}

/* docked panels */
.workspace{height:945px;flex:none;display:grid;grid-template-columns:906px 274px 511px 223px;gap:2px}
.column{display:grid;grid-template-rows:484px 459px;gap:2px}
.panel{background:#2d2d2d;display:flex;flex-direction:column;overflow:hidden;border-radius:3px 3px 0 0}
.tabs{height:19px;flex:none;background:#202020;display:flex;align-items:center;padding-right:12px;box-shadow:inset 0 -1px #1a1a1a}
.tab{height:19px;background:#303030;display:flex;align-items:center;gap:5px;padding:3px 0 0 8px;margin-right:auto;border-radius:3px 2px 0 0}
.tab svg{margin-top:-3px}
.scene .tab{gap:4px}
.tab.focused{border-top:2px solid #1f4468;padding:1px 0 0 6px;gap:3px}
.tab.focused svg{margin-top:-1px}
.tabs .lock{margin-right:12px;margin-top:-1px}
.tabs .kebab{margin-top:-1px}
.inspector .tabs{padding-right:13px}
.w76{width:76px}.w73{width:73px}.w96{width:96px}.w81{width:81px}.w93{width:93px}

.scene-tools{height:26px;flex:none;background:#303030;display:flex;align-items:center;padding:0 4px 0 6px}
.grip{width:4px;height:16px;border:solid #454545;border-width:0 1px;margin-right:6px}
.grip.second{margin-left:10px}
.grip.push{margin-left:auto}
.tool{height:20px;background:#454545;border-radius:2px;display:flex;align-items:center;justify-content:center}
.tool.on{background:#374a63;color:#c8c8c8}
.tool.off{background:#373737;color:#666}
.tool.flat-r{border-radius:2px 0 0 2px;margin-right:1px}
.tool.flat-l{border-radius:0 2px 2px 0}
.gap4{margin-left:4px}
.w75,.w67,.w36{justify-content:space-between;padding:0 6px 0 4px}
.w75 span,.w67 span{flex:1;padding-left:1px}
.w75{width:75px}.w67{width:67px}.w36{width:36px}.w32{width:32px}.w22{width:22px}.w14{width:14px}

.scene-view{flex:1;position:relative;background:#464646}
.canvas{font-family:"Liberation Sans", Arial, sans-serif;letter-spacing:0}
.over{fill:#f00;stroke:#f00;stroke-width:1}
.retry{fill:#323232;stroke:#323232;stroke-width:.4}
.grid path{fill:none;stroke:#929292;stroke-opacity:.46}
.grid .wide{stroke-width:2;stroke-opacity:.42}
.bounds{fill:none;stroke:#c4c4c4}
.bounds.base{stroke-width:2;stroke:#a6a6a6}

/* tool overlay floats over the scene */
.palette{
  position:absolute;
  left:2px;
  top:2px;
  width:38px;
  height:147px;
  padding:6px 3px 0;
  background:#0e0e0e;
  border-radius:3px;
}
.palette i{display:block;width:16px;height:4px;margin:0 auto 8px;border:solid #454545;border-width:1px 0}
.palette div{height:20px;margin-bottom:1px;padding-bottom:1px;background:#404040;display:flex;align-items:center;justify-content:center}
.palette .on{background:#374a63;color:#d0d0d0}

.game-tools{height:21px;flex:none;background:#2f2f2f;display:flex;border-bottom:1px solid #1c1c1c}
.seg{display:flex;align-items:center;justify-content:space-between;padding:0 8px 0 4px;border-right:1px solid #1e1e1e}
.seg span{padding-top:2px}
.g-mode{width:91px;padding-right:4px}
.g-display{width:86px;padding:0 4px 0 9px}
.g-aspect{width:160px}
.g-aspect,.g-focus{padding-right:4px}
.g-aspect{padding-left:3px}
.g-scale{width:258px;justify-content:flex-start;gap:5px;padding-left:6px}
.g-focus{width:109px;color:#606060;padding-left:3px}
.g-focus .caret{margin-right:-1px}
.g-icon{width:25.500px;padding:0;justify-content:center}
.g-bug{width:26.500px;padding:0;justify-content:center}
.g-empty{width:16px;padding:0}
.g-stats{width:39px;padding-right:0}
.g-gizmos{width:52px;padding-right:0;border:0}
.g-last{width:17px;padding:0 5px 0 4px;border:0}
.slider{height:2px;flex:none;background:#4a4a4a;width:145px;display:flex;align-items:center;margin:0 1px}
.slider i{width:10px;height:10px;border-radius:50%;background:#808080}
.g-scale .slider{width:151px}
.game-view{flex:1;background:#000}

.search-tools{height:21px;flex:none;background:#303030;display:flex;align-items:center;padding-left:7px;border-bottom:1px solid #1c1c1c}
.search-tools > .caret{margin-left:5px}
.search{
  height:16px;
  width:227px;
  margin:-1px 0 0 12px;
  background:#202020;
  border:1px solid #151515;
  border-radius:3px;
  display:flex;
  align-items:center;
  color:#606060;
  padding-left:4px;
}
.search .i7,.search .tiny,.expand{color:#a0a0a0}
.search span{margin-left:4px;padding-top:1px}
.expand{margin-left:auto;width:17px;height:14px;border-left:1px solid #1a1a1a;background:#2b2b2b;display:flex;align-items:center;justify-content:center}
.project .search{width:320px}
.project .search .i7{margin-left:1px}
.filter{width:25px;height:20px;margin-left:1px;display:flex;align-items:center;justify-content:center;border-left:1px solid #1c1c1c}
.search + .filter{margin-left:2px}
.filter.dim{color:#747474}
.filter.hidden-count{width:40px;gap:2px;padding-top:1px}

.objects{flex:1;background:linear-gradient(90deg,#282828 32px,#2d2d2d 32px)}
.object{height:16px;display:flex;align-items:center;padding-left:60px;letter-spacing:.03px}
.object.parent{padding-left:49px}
.parent .unfold{margin-right:3px}
.object.root{background:#212121;border-bottom:1px solid #303030;padding:0 11px 0 34px}
.root b,.root .logo{color:#c4c4c4}
.root b{color:#b4b4b4;letter-spacing:.15px}
.root .kebab{margin-left:auto}
.root .unfold{margin:0 0 0 1px}
.logo{width:13px;height:14px;margin:0 4px 0 5px}
.cube{width:14px;height:15px;margin-right:4px}

.browser{flex:1;display:grid;grid-template-columns:151px 1fr;min-height:0}
.tree{overflow:hidden;width:151px;border-right:1px solid #1a1a1a}
.node{height:16px;display:flex;align-items:center;letter-spacing:-.02px}
.node.top{padding-left:4px}
.node.top b{margin-left:5px;letter-spacing:.05px}
.node.top .fold{margin-right:5px}
.node.top .i12{margin-right:1px}
.dir-open{width:14px;height:11px;margin-right:-1px}
.node.leaf{padding-left:32px}
.node.leaf.last{margin-bottom:15px}
.node.leaf svg,.node .dir{margin-right:4px}
.node.pkg{padding-left:19px}
.node.pkg .unfold{margin-right:5px}
.node.selected{background:#3d3d3d}
.dir{width:12px;height:10px}
.content{background:#292929;display:flex;flex-direction:column}
.crumbs{height:21px;background:#333;display:flex;align-items:center;gap:6px;padding:0 0 1px 4px}
.assets{flex:1;display:grid;grid-template-columns:repeat(4,85px);grid-auto-rows:93px;padding:13px 0 0 9px}
.asset{display:flex;flex-direction:column;align-items:center;font-size:10px;line-height:12px;letter-spacing:.2px}
.asset svg{width:48px;height:57px;margin-bottom:6px}
.zoom-bar{height:21px;background:#333;display:flex;align-items:center;justify-content:flex-end;padding-right:15px}
.zoom-bar .slider{width:56px;justify-content:center;padding-left:9px}

.statusbar{height:22px;flex:none;background:#141414;display:flex;justify-content:flex-end;padding-right:1px}
.statusbar div{width:26.500px;border-left:1px solid #222;display:flex;align-items:center;justify-content:center;padding-top:2px}

.taskbar{height:40px;flex:none;background:#1e1e1e;display:flex}
.task{width:49px;height:40px;display:flex;align-items:center;justify-content:center}
.task:nth-child(1){width:48px}
.task:nth-child(2){margin-left:2px}
.task.open{background:linear-gradient(#76b9ed,#76b9ed) center bottom/40px 2px no-repeat}
.task.open.active{background:#4a4a4a;width:48px;margin-right:1px;border-bottom:2px solid #76b9ed;padding-top:2px}
.tray{margin-left:auto;display:flex;align-items:center;color:#fff}
.tray > svg{fill:none;stroke:#fff}
.chev{width:12px;height:7px;margin-right:12px}
.meet{width:12px;height:16px;margin-right:10px}
.vol{width:14px;height:12px;margin-right:10px}
.net{width:16px;height:14px;margin-right:6px}
.ime{font:16px/20px "Noto Sans CJK TC", sans-serif;letter-spacing:0;margin-right:9px}
.clock{width:62px;padding-bottom:2px;display:flex;flex-direction:column;align-items:center;font:12px/19px "Open Sans", "Noto Sans CJK TC", sans-serif;letter-spacing:0}
.notify{position:relative;margin-left:18px;width:16px}
.notify b{
  position:absolute;
  left:8px;
  top:6px;
  width:16px;
  height:16px;
  border:1px solid #888;
  border-radius:50%;
  background:#2a2a2a;
  font:11px/14px "Open Sans", sans-serif;
  text-align:center;
  letter-spacing:0;
}
.peek{width:1px;height:40px;background:#5a5a5a;margin:0 4px 0 20px}
```
